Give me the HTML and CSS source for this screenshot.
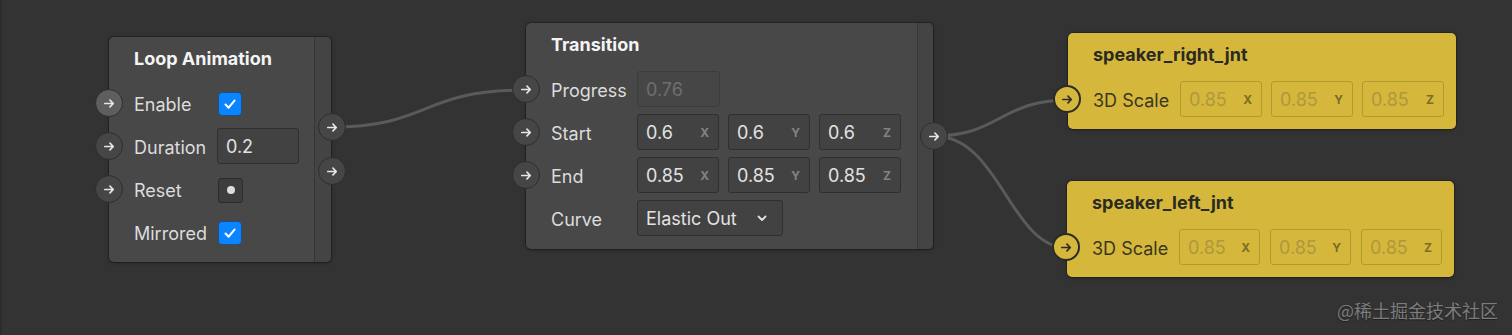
FILE: index.html
```html
<!DOCTYPE html>
<html lang="en">
<head>
  <meta charset="UTF-8">
  <title>Node Graph</title>
  <link rel="stylesheet" href="styles.css">
</head>
<body>
  <div class="canvas">
    <svg class="wires" width="1512" height="335">
      <path d="M332 127 C 430 127, 420 90, 526 90" />
      <path d="M934 136 C 1000 136, 1000 100, 1069 100" />
      <path d="M934 136 C 1000 136, 1010 248, 1068 248" />
    </svg>

    <!-- Loop Animation -->
    <div class="node loop">
      <div class="node-body">
        <div class="node-title">Loop Animation</div>
        <div class="rows">
          <div class="row">
            <span class="port in active"><svg viewBox="0 0 16 16"><path d="M3 8h9M8.5 4.5 12 8l-3.5 3.5"/></svg></span>
            <span class="label">Enable</span>
            <span class="check"><svg viewBox="0 0 16 16"><path d="M4 8.5l2.8 2.8L12 5"/></svg></span>
          </div>
          <div class="row">
            <span class="port in"><svg viewBox="0 0 16 16"><path d="M3 8h9M8.5 4.5 12 8l-3.5 3.5"/></svg></span>
            <span class="label">Duration</span>
            <span class="field">0.2</span>
          </div>
          <div class="row">
            <span class="port in"><svg viewBox="0 0 16 16"><path d="M3 8h9M8.5 4.5 12 8l-3.5 3.5"/></svg></span>
            <span class="label">Reset</span>
            <span class="trigger"><i></i></span>
          </div>
          <div class="row">
            <span class="label">Mirrored</span>
            <span class="check"><svg viewBox="0 0 16 16"><path d="M4 8.5l2.8 2.8L12 5"/></svg></span>
          </div>
        </div>
      </div>
      <div class="node-strip">
        <span class="port out out-1"><svg viewBox="0 0 16 16"><path d="M3 8h9M8.5 4.5 12 8l-3.5 3.5"/></svg></span>
        <span class="port out out-2"><svg viewBox="0 0 16 16"><path d="M3 8h9M8.5 4.5 12 8l-3.5 3.5"/></svg></span>
      </div>
    </div>

    <!-- Transition -->
    <div class="node transition">
      <div class="node-body">
        <div class="node-title">Transition</div>
        <div class="rows">
          <div class="row">
            <span class="port in"><svg viewBox="0 0 16 16"><path d="M3 8h9M8.5 4.5 12 8l-3.5 3.5"/></svg></span>
            <span class="label">Progress</span>
            <span class="field disabled">0.76</span>
          </div>
          <div class="row">
            <span class="port in"><svg viewBox="0 0 16 16"><path d="M3 8h9M8.5 4.5 12 8l-3.5 3.5"/></svg></span>
            <span class="label">Start</span>
            <span class="vec">
              <span class="field">0.6<b>X</b></span>
              <span class="field">0.6<b>Y</b></span>
              <span class="field">0.6<b>Z</b></span>
            </span>
          </div>
          <div class="row">
            <span class="port in"><svg viewBox="0 0 16 16"><path d="M3 8h9M8.5 4.5 12 8l-3.5 3.5"/></svg></span>
            <span class="label">End</span>
            <span class="vec">
              <span class="field">0.85<b>X</b></span>
              <span class="field">0.85<b>Y</b></span>
              <span class="field">0.85<b>Z</b></span>
            </span>
          </div>
          <div class="row">
            <span class="label">Curve</span>
            <span class="field select">Elastic Out<svg viewBox="0 0 16 16"><path d="M4.5 6.5 8 10l3.5-3.5"/></svg></span>
          </div>
        </div>
      </div>
      <div class="node-strip">
        <span class="port out out-1"><svg viewBox="0 0 16 16"><path d="M3 8h9M8.5 4.5 12 8l-3.5 3.5"/></svg></span>
      </div>
    </div>

    <!-- Joints -->
    <div class="node joint right-jnt">
      <div class="node-body">
        <div class="node-title">speaker_right_jnt</div>
        <div class="rows">
          <div class="row">
            <span class="port in"><svg viewBox="0 0 16 16"><path d="M3 8h9M8.5 4.5 12 8l-3.5 3.5"/></svg></span>
            <span class="label">3D Scale</span>
            <span class="vec">
              <span class="field">0.85<b>X</b></span>
              <span class="field">0.85<b>Y</b></span>
              <span class="field">0.85<b>Z</b></span>
            </span>
          </div>
        </div>
      </div>
    </div>

    <div class="node joint left-jnt">
      <div class="node-body">
        <div class="node-title">speaker_left_jnt</div>
        <div class="rows">
          <div class="row">
            <span class="port in"><svg viewBox="0 0 16 16"><path d="M3 8h9M8.5 4.5 12 8l-3.5 3.5"/></svg></span>
            <span class="label">3D Scale</span>
            <span class="vec">
              <span class="field">0.85<b>X</b></span>
              <span class="field">0.85<b>Y</b></span>
              <span class="field">0.85<b>Z</b></span>
            </span>
          </div>
        </div>
      </div>
    </div>

    <div class="watermark">@稀土掘金技术社区</div>
  </div>
</body>
</html>
```

FILE: styles.css
```css
* {
  margin: 0;
  padding: 0;
  box-sizing: border-box;
}

body {
  background-color: #333333;
  font-family: Inter, "Noto Sans", sans-serif;
  color: #dedede;
}

.canvas {
  position: relative;
  width: 1512px;
  height: 335px;
  background-color: #333333;
  border-left: 2px solid #2b2b2b;
  overflow: hidden;
}

.wires {
  position: absolute;
  left: -2px;
  top: 0;
}

.wires path {
  fill: none;
  stroke: #5a5a5a;
  stroke-width: 3;
}

/* nodes */
.node {
  position: absolute;
  display: flex;
  background-color: #484848;
  border-radius: 5px;
  box-shadow: 0 0 0 1px rgba(0, 0, 0, 0.25), 0 1px 4px rgba(0, 0, 0, 0.3);
}

.node-body {
  flex: 1;
  padding: 10px 0 12px 25px;
}

.node-title {
  font-size: 18px;
  font-weight: 700;
  line-height: 24px;
  color: #f4f4f4;
  margin-bottom: 14px;
}

.rows {
  display: flex;
  flex-direction: column;
  gap: 7px;
}

.row {
  position: relative;
  display: flex;
  align-items: center;
  height: 36px;
  padding-top: 2px;
}

.label {
  font-size: 18px;
  color: #dcdcdc;
}

.node-strip {
  position: relative;
  width: 17px;
  background-color: #444444;
  border-left: 1px solid #363636;
  border-radius: 0 5px 5px 0;
}

.loop {
  left: 107px;
  top: 37px;
  width: 222px;
  height: 225px;
}

.loop .label {
  width: 83px;
}

.transition {
  left: 524px;
  top: 23px;
  width: 407px;
  height: 226px;
}

.transition .node-strip {
  width: 16px;
}

.transition .label {
  width: 86px;
}

/* ports */
.port {
  position: absolute;
  width: 28px;
  height: 28px;
  border-radius: 50%;
  background-color: #464646;
  border: 1px solid #2e2e2e;
  display: flex;
  align-items: center;
  justify-content: center;
}

.port svg {
  width: 15px;
  height: 15px;
  fill: none;
  stroke: #e6e6e6;
  stroke-width: 1.8;
  stroke-linecap: round;
  stroke-linejoin: round;
}

.port.in {
  left: -39px;
  top: 4px;
}

.port.active {
  background-color: #5e5e5e;
}

.port.out {
  right: -15px;
}

.loop .out-1 {
  top: 76px;
}

.loop .out-2 {
  top: 120px;
}

.transition .out-1 {
  top: 99px;
}

/* inputs */
.field {
  width: 82px;
  height: 36px;
  display: flex;
  align-items: center;
  justify-content: space-between;
  padding: 0 9px 0 8px;
  background-color: #424242;
  border: 1px solid #2f2f2f;
  border-radius: 3px;
  font-size: 18px;
  color: #e2e2e2;
}

.field b {
  font-size: 12px;
  font-weight: 700;
  color: #828282;
}

.field.disabled {
  width: 83px;
  color: #6f6f6f;
  background-color: #464646;
  border-color: #3c3c3c;
}

.vec {
  display: flex;
  gap: 9px;
  margin-top: -2px;
}

.row > .field {
  margin-top: -2px;
}

.select {
  width: 146px;
  padding-right: 12px;
}

.select svg {
  width: 16px;
  height: 16px;
  fill: none;
  stroke: #e2e2e2;
  stroke-width: 1.8;
  stroke-linecap: round;
  stroke-linejoin: round;
}

.check {
  width: 24px;
  height: 24px;
  margin-left: 1px;
  border-radius: 4px;
  background-color: #0a84ff;
  border: 1px solid #1f4f80;
  display: flex;
  align-items: center;
  justify-content: center;
}

.check svg {
  width: 18px;
  height: 18px;
  fill: none;
  stroke: #ffffff;
  stroke-width: 1.8;
  stroke-linecap: round;
  stroke-linejoin: round;
}

.trigger {
  width: 25px;
  height: 25px;
  margin-left: 1px;
  border-radius: 3px;
  background-color: #3d3d3d;
  border: 1px solid #2c2c2c;
  display: flex;
  align-items: center;
  justify-content: center;
}

.trigger i {
  width: 8px;
  height: 8px;
  border-radius: 50%;
  background-color: #dddddd;
}

/* yellow joint nodes */
.joint {
  background-color: #d5b83b;
  box-shadow: 0 0 0 1px rgba(0, 0, 0, 0.2), 0 1px 4px rgba(0, 0, 0, 0.3);
}

.joint .node-title {
  color: #2b2a22;
}

.joint .label {
  width: 87px;
  color: #3a3621;
}

.joint .field {
  width: 82px;
  background-color: #d5b83b;
  border-color: #b39a2f;
  color: #ae973f;
}

.joint .field b {
  color: #7d6c27;
}

.joint .port {
  background-color: #d5b83b;
  border: 2px solid #2b2b2b;
  left: -40px;
}

.joint .port svg {
  stroke: #2b2b2b;
}

.right-jnt {
  left: 1066px;
  top: 33px;
  width: 388px;
  height: 96px;
}

.left-jnt {
  left: 1065px;
  top: 181px;
  width: 387px;
  height: 96px;
}

.left-jnt .field {
  width: 81px;
}

.left-jnt .vec {
  gap: 10px;
}

.watermark {
  position: absolute;
  left: 1335px;
  top: 297px;
  font-family: "Noto Sans CJK SC", sans-serif;
  font-size: 18px;
  color: #7c7c7c;
  text-shadow: 0 1px 1px rgba(0, 0, 0, 0.4);
}
```
